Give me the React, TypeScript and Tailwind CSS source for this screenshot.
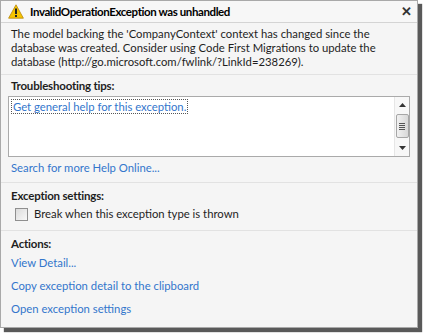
import { useState } from "react";

const font = { fontFamily: '"Segoe UI", Lato, "Liberation Sans", sans-serif' };

function WarningIcon() {
  return (
    <svg width="16" height="15" viewBox="0 0 16 15" className="shrink-0">
      <path d="M8 0.8 L15.4 14.2 L0.6 14.2 Z" fill="#f5c400" stroke="#b8860b" strokeWidth="0.8" strokeLinejoin="round" />
      <rect x="7" y="4.5" width="2" height="5.5" fill="#222" />
      <rect x="7" y="11" width="2" height="2" fill="#222" />
    </svg>
  );
}

function Scrollbar() {
  return (
    <div className="flex w-[15px] flex-col items-center border-l border-[#e6e6e6] bg-[#f7f7f7]">
      <div className="flex h-[16px] items-center justify-center">
        <svg width="7" height="4" viewBox="0 0 7 4"><path d="M0 4 L3.5 0 L7 4 Z" fill="#333" /></svg>
      </div>
      <div className="mt-[1px] flex h-[24px] w-[13px] flex-col items-center justify-center gap-[1px] rounded-[2px] border border-[#a6a6a6] bg-gradient-to-r from-[#f1f1f1] to-[#d8d8d8]">
        <div className="h-px w-[6px] bg-[#555]" />
        <div className="h-px w-[6px] bg-[#555]" />
        <div className="h-px w-[6px] bg-[#555]" />
        <div className="h-px w-[6px] bg-[#555]" />
      </div>
      <div className="flex-1" />
      <div className="flex h-[16px] items-center justify-center">
        <svg width="7" height="4" viewBox="0 0 7 4"><path d="M0 0 L3.5 4 L7 0 Z" fill="#333" /></svg>
      </div>
    </div>
  );
}

export default function App() {
  const [checked, setChecked] = useState(false);
  const link = "text-[#3376cc] hover:underline cursor-pointer";
  const heading = "text-[11.5px] font-bold leading-[16px] tracking-[-0.2px]";

  return (
    <div className="h-[333px] w-[424px] bg-white" style={font}>
      <div className="flex h-[328px] w-[418px] flex-col border border-[#a9a9a9] bg-[#f5f5f5] text-[11.3px] text-[#1e1e1e] shadow-[4px_4px_1px_rgba(60,60,60,0.85)]">
        <div className="flex h-[22px] items-center border-b border-[#d4d4d4] bg-[#f7f7f7] pl-[7px] pr-[5px]">
          <WarningIcon />
          <span className="ml-[6px] flex-1 text-[11.5px] font-bold tracking-[-0.4px] text-black">InvalidOperationException was unhandled</span>
          <span className="text-[13px] font-bold leading-none text-[#333]">✕</span>
        </div>

        <div className="border-b border-[#e2e2e2] px-[10px] pb-[5px] pt-[4px] leading-[14px]">
          The model backing the 'CompanyContext' context has changed since the
          <br />
          database was created. Consider using Code First Migrations to update the
          <br />
          database (http://go.microsoft.com/fwlink/?LinkId=238269).
        </div>

        <div className="px-[7px] pt-[3px]">
          <div className={`${heading} pl-[3px]`}>Troubleshooting tips:</div>
          <div className="mt-[2px] flex h-[61px] border border-[#aaaaaa] bg-white">
            <div className="flex-1 px-[2px] pt-[2px]">
              <span className={`${link} border border-dotted border-[#555] px-[1px] leading-[14px]`}>Get general help for this exception.</span>
            </div>
            <Scrollbar />
          </div>
          <div className={`${link} pl-[3px] pt-[3px] leading-[16px]`}>Search for more Help Online...</div>
        </div>

        <div className="mt-[6px] border-t border-[#e2e2e2] px-[10px] pt-[5px]">
          <div className={heading}>Exception settings:</div>
          <label className="mt-[2px] flex items-center pl-[4px] leading-[16px]">
            <span
              onClick={() => setChecked(!checked)}
              className="mr-[6px] flex h-[13px] w-[13px] items-center justify-center border border-[#8f8f8f] bg-gradient-to-br from-[#dcdcdc] to-[#f8f8f8] text-[10px]"
            >
              {checked ? "✓" : ""}
            </span>
            Break when this exception type is thrown
          </label>
        </div>

        <div className="mt-[8px] flex-1 border-t border-[#e2e2e2] px-[10px] pt-[5px]">
          <div className={heading}>Actions:</div>
          <div className="mt-[3px] flex flex-col gap-[7px] leading-[16px]">
            <span className={link}>View Detail...</span>
            <span className={link}>Copy exception detail to the clipboard</span>
            <span className={link}>Open exception settings</span>
          </div>
        </div>
      </div>
    </div>
  );
}
